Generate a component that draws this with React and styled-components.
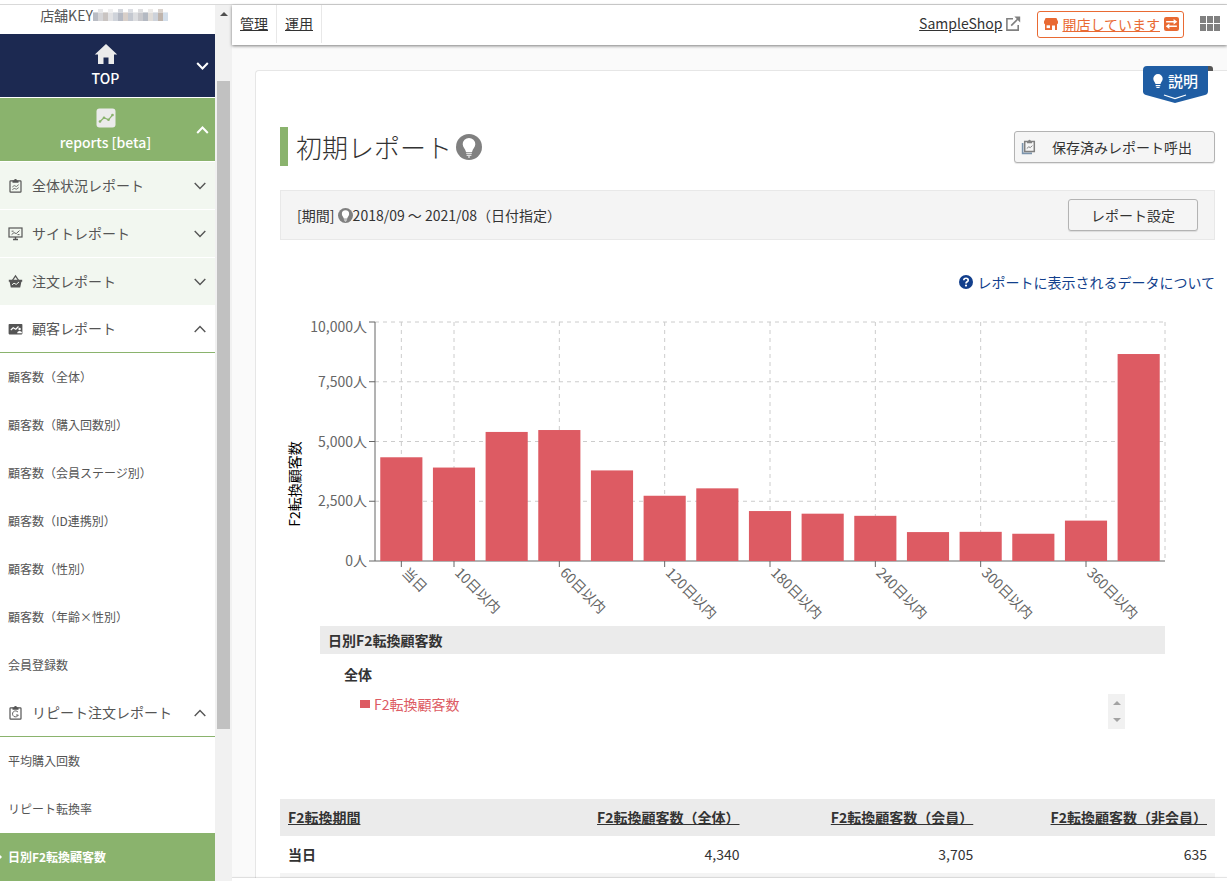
import styled, { createGlobalStyle, css } from 'styled-components';

const GlobalStyle = createGlobalStyle`
	* {
		box-sizing: border-box;
	}
	body {
		margin: 0;
		color: #333;
		background: white;
		font-family: 'Noto Sans CJK JP', sans-serif;
		font-size: 14px;
		line-height: 20px;
	}
	button {
		font: inherit;
		color: inherit;
		cursor: pointer;
	}
`;

const Page = styled.div`
	display: flex;
	height: 100vh;
	padding-top: 4px;
	overflow: hidden;
`;
const Sidebar = styled.aside`
	flex: none;
	display: flex;
	border-top: 1px solid #d9d9d9;
`;
const Menu = styled.nav`
	width: 215px;
	color: #555;
	overflow: hidden;
`;
const ShopKey = styled.div`
	display: flex;
	justify-content: center;
	height: 29px;
	padding-right: 4px;
`;
const Mosaic = styled.svg`
	margin-top: 4px;
`;
const MainItem = styled.button`
	display: grid;
	grid-template-columns: 1fr 13px;
	align-items: center;
	width: 100%;
	height: 64px;
	padding: 0 6px 0 9px;
	border: none;
	border-bottom: 1px solid white;
	color: white;
	font-weight: 500;
	background: ${(props) => (props.$active ? '#8ab36d' : '#1c2951')};
`;
const MainLabel = styled.span`
	display: flex;
	flex-direction: column;
	align-items: center;
	gap: 4px;
	padding-left: 6px;
`;
const GroupItem = styled.button`
	display: flex;
	align-items: center;
	gap: 8px;
	width: 100%;
	height: ${(props) => (props.$beforeOpen ? 47 : 48)}px;
	padding: 0 9px 0 8px;
	border: none;
	border-bottom: ${(props) => (props.$beforeOpen ? 0 : 1)}px solid ${(props) => (props.$open ? '#8ab36d' : 'white')};
	background: ${(props) => (props.$open ? 'white' : '#f2f7f0')};
	text-align: left;
`;
const GroupLabel = styled.span`
	flex: 1;
	padding-bottom: 2px;
`;
const SubItem = styled.a`
	display: flex;
	align-items: center;
	position: relative;
	height: 48px;
	padding: 0 8px;
	color: #555;
	font-size: 12px;
	text-decoration: none;
	${(props) =>
		props.$active &&
		css`
			color: white;
			font-weight: 700;
			background: #8ab36d;
			&::before {
				content: '';
				position: absolute;
				left: -1px;
				border: 3px solid transparent;
				border-left-color: white;
			}
		`}
`;
const ScrollTrack = styled.div`
	display: flex;
	flex-direction: column;
	align-items: center;
	width: 17px;
	background: #f1f1f1;
`;
const ScrollArrow = styled.span`
	border: 4px solid transparent;
	border-top-width: 0;
	border-bottom-color: #505050;
	margin: 7px 0 65px;
`;
const ScrollThumb = styled.div`
	width: 13px;
	height: 74%;
	background: #c1c1c1;
`;

const Main = styled.div`
	flex: 1;
	min-width: 0;
	display: flex;
	flex-direction: column;
	border-top: 1px solid #d9d9d9;
`;
const Header = styled.header`
	display: flex;
	align-items: center;
	flex: none;
	height: 40px;
	padding: 0 7px 2px 0;
	background: white;
	box-shadow: 0 1px 3px rgba(0, 0, 0, 0.5);
	z-index: 1;
`;
const Tab = styled.a`
	display: flex;
	align-items: center;
	height: 38px;
	padding: 0 8px 2px;
	border-right: 1px solid #e8e8e8;
	color: #333;
`;
const ShopLink = styled.a`
	display: flex;
	align-items: center;
	gap: 4px;
	margin-left: auto;
	padding-bottom: 2px;
	color: #333;
`;
const StatusButton = styled.button`
	display: flex;
	align-items: center;
	gap: 4px;
	height: 27px;
	margin: 0 16px;
	padding: 0 4px 0 6px;
	border: 1px solid #e96a33;
	border-radius: 3px;
	background: white;
	color: #e96a33;
`;
const Underlined = styled.span`
	text-decoration: underline;
`;
const IconButton = styled.button`
	display: flex;
	padding: 0;
	border: none;
	background: none;
`;
const Content = styled.main`
	flex: 1;
	min-height: 0;
	padding: 25px 0 0 23px;
	overflow: hidden;
	background: #fafafa;
`;
const Card = styled.section`
	position: relative;
	min-height: 100%;
	padding: 56px 12px 0 24px;
	border: 1px solid #e6e6e6;
	border-right: none;
	border-radius: 4px 0 0 0;
	background: white;
`;
const HelpTag = styled.button`
	position: absolute;
	top: -5px;
	right: 14px;
	width: 70px;
	height: 37px;
	padding: 0;
	border: none;
	background: none;
	color: white;
	font-size: 15px;
	font-weight: 500;
`;
const HelpShape = styled.svg`
	position: absolute;
	left: 0;
	top: 0;
`;
const HelpText = styled.span`
	position: absolute;
	left: 25px;
	top: 5px;
`;
const TitleRow = styled.div`
	display: flex;
	align-items: center;
	justify-content: space-between;
	height: 39px;
`;
const Title = styled.h1`
	display: flex;
	align-items: center;
	gap: 4px;
	height: 39px;
	margin: 0;
	padding-left: 8px;
	border-left: 8px solid #8ab36d;
	font-size: 26px;
	font-weight: 300;
`;
const Button = styled.button`
	display: flex;
	align-items: center;
	gap: 15px;
	height: 32px;
	padding: ${(props) => (props.$icon ? '0 22px 0 6px' : '0 22px')};
	border: 1px solid #b3b3b3;
	border-radius: 3px;
	background: #f5f5f5;
	box-shadow: 0 1px 1px rgba(0, 0, 0, 0.1);
`;
const PeriodBar = styled.div`
	display: flex;
	align-items: center;
	justify-content: space-between;
	height: 50px;
	margin-top: 24px;
	padding: 0 16px;
	border: 1px solid #e8e8e8;
	background: #f4f4f4;
`;
const PeriodText = styled.span`
	display: flex;
	align-items: center;
`;
const AboutLink = styled.a`
	display: flex;
	align-items: center;
	justify-content: flex-end;
	gap: 4px;
	margin-top: 32px;
	color: #123f8c;
	text-decoration: none;
`;
const Chart = styled.svg`
	display: block;
	width: 100%;
	margin-top: 18px;
	font-size: 14px;
`;
const Legend = styled.div`
	margin: 0 50px 0 40px;
`;
const LegendTitle = styled.div`
	height: 28px;
	padding: 4px 8px;
	background: #ebebeb;
	font-weight: 700;
`;
const LegendBody = styled.div`
	display: flex;
	justify-content: space-between;
	align-items: flex-end;
	height: 75px;
	padding: 0 40px 0 24px;
`;
const LegendList = styled.div`
	align-self: flex-start;
	padding-top: 10px;
`;
const LegendGroup = styled.div`
	font-weight: 700;
`;
const LegendEntry = styled.div`
	display: flex;
	align-items: center;
	gap: 4px;
	padding: 10px 16px;
	color: #dd5b63;
`;
const Swatch = styled.span`
	width: 10px;
	height: 8px;
	background: #dd5b63;
`;
const Spinner = styled.div`
	display: flex;
	flex-direction: column;
	align-items: center;
	justify-content: space-between;
	width: 17px;
	height: 35px;
	padding: 7px 0;
	background: #f1f1f1;
`;
const Arrow = styled.span`
	border: 4px solid transparent;
	${(props) =>
		props.$down
			? 'border-bottom-width: 0; border-top-color: #a3a3a3;'
			: 'border-top-width: 0; border-bottom-color: #a3a3a3;'}
`;
const Table = styled.table`
	width: 100%;
	margin-top: 70px;
	border-spacing: 0;
	table-layout: fixed;
`;
const TableEnd = styled.div`
	height: 24px;
	background: #f4f4f4;
`;
const Th = styled.th`
	height: 37px;
	padding: 0 8px 2px;
	background: ${(props) => (props.$row ? 'white' : '#ebebeb')};
	font-weight: 700;
	text-align: ${(props) => (props.$right ? 'right' : 'left')};
`;
const Td = styled.td`
	height: 37px;
	padding: 0 8px 2px;
	text-align: right;
`;
const SortLink = styled.a`
	color: #333;
`;
const Footer = styled.footer`
	flex: none;
	height: 3px;
	background: white;
	box-shadow: 0 -1px 1px rgba(0, 0, 0, 0.12);
	z-index: 1;
`;

const Chevron = ({ up, size = 12, width = 2 }) => (
	<svg width={size} height="8" viewBox="0 0 12 8" fill="none" stroke="currentColor" strokeWidth={width}>
		<path d={up ? 'M0.7 7 6 1.5 11.3 7' : 'M0.7 1 6 6.5 11.3 1'} />
	</svg>
);

const HomeIcon = () => (
	<svg width="24" height="20" viewBox="0 0 24 20" fill="#ebebeb">
		<path d="M12 0 .8 10.6H4V20h5.5v-6.5h5V20H20v-9.4h3.2z" />
	</svg>
);
const ReportsIcon = () => (
	<svg width="20" height="20" viewBox="0 0 20 20">
		<rect x="0.5" y="0.5" width="19" height="19" rx="3" fill="#ebebeb" />
		<path d="M4 13.5 8 9.8l4.5 2L16.5 7" fill="none" stroke="#8ab36d" strokeWidth="1.2" />
		<g fill="#8ab36d">
			<circle cx="4" cy="13.5" r="1.3" />
			<circle cx="8" cy="9.8" r="1.3" />
			<circle cx="12.5" cy="11.8" r="1.3" />
			<circle cx="16.5" cy="7" r="1.3" />
		</g>
	</svg>
);
const ClipboardIcon = ({ repeat }) => (
	<svg width="16" height="16" viewBox="0 0 16 16" fill="none" stroke="#555">
		<rect x="2" y="2.8" width="11" height="11.4" rx="0.8" strokeWidth="1.2" />
		<path d="M4.5 2.5h1.6a1.4 1.4 0 0 1 2.8 0h1.6v2.3h-6z" fill="#555" stroke="none" />
		{repeat ? (
			<path d="M10 7.2A3 3 0 1 0 10.3 10H8" strokeWidth="0.9" />
		) : (
			<path d="M4.3 9 6.2 7.6l2.2.9 2.3-1.8M4.3 11.7l1.9-1.3 2.2.8 2.3-1.6" strokeWidth="0.8" />
		)}
	</svg>
);
const MonitorIcon = () => (
	<svg width="16" height="16" viewBox="0 0 16 16" fill="none" stroke="#555">
		<rect x="1" y="2" width="13" height="9" strokeWidth="1.2" />
		<path d="M3.6 8.6 6 6.6l2.2 1L11.5 4.6M3.6 5.2h2M9.5 8.6h2" strokeWidth="0.9" />
		<path d="M7.5 11v2.5M5 13.5h5" strokeWidth="1.4" />
	</svg>
);
const BasketIcon = () => (
	<svg width="16" height="16" viewBox="0 0 16 16">
		<path d="M4 7 7.5 2 11 7" fill="none" stroke="#555" strokeWidth="1.3" />
		<path d="M0.8 5.8h13.4v2h-.8L12.2 13.4H2.8L1.6 7.8H.8z" fill="#555" />
		<path d="M4 10.8 6 9.2l2.2 1.2L11 8" fill="none" stroke="#f2f7f0" />
	</svg>
);
const CustomerIcon = () => (
	<svg width="16" height="16" viewBox="0 0 16 16">
		<rect x="0.6" y="3" width="13.8" height="10.4" rx="0.8" fill="#555" />
		<path d="M2.8 9 5.2 6.8 7.8 8.2 10.5 5.5" fill="none" stroke="white" strokeWidth="1.2" />
		<circle cx="11.6" cy="8" r="1.2" fill="white" />
		<path d="M9.2 12.2c0-3 4.8-3 4.8 0z" fill="white" />
	</svg>
);
const BulbIcon = ({ size }) => (
	<svg width={size} height={size} viewBox="0 0 26 26">
		<circle cx="13" cy="13" r="13" fill="#808080" />
		<path d="M13 4a6.3 6.3 0 0 0-6.3 6.3c0 3 2.6 4.6 3.3 7.7h6c.7-3.1 3.3-4.7 3.3-7.7A6.3 6.3 0 0 0 13 4z" fill="white" />
		<path d="M10.2 19.3h5.6M10.6 21.3h4.8M12 23h2" stroke="white" strokeWidth="1.1" />
	</svg>
);
const ExternalIcon = () => (
	<svg width="15" height="15" viewBox="0 0 15 15" fill="none" stroke="#808080" strokeWidth="1.6">
		<path d="M7 2.8H.9v11.3h11.3V9M5.2 9.6l7.4-7.4" />
		<path d="M8.4 0.6h5.8v5.8z" fill="#808080" stroke="none" />
	</svg>
);
const ShopIcon = () => (
	<svg width="14" height="14" viewBox="0 0 14 14" fill="#e96a33">
		<path d="M1.6 1h10.8L14 4.6v1.2a1.6 1.6 0 0 1-1 1.5V13h-2V8.5H8V13H1V7.3a1.6 1.6 0 0 1-1-1.5V4.6z" />
		<path d="M2.6 8.3h3.4v2.8H2.6z" fill="white" />
	</svg>
);
const SwapIcon = () => (
	<svg width="15" height="14" viewBox="0 0 14 14" preserveAspectRatio="none">
		<rect width="14" height="14" rx="2" fill="#e96a33" />
		<path d="M2 4.8h8M12 9.2H4" stroke="white" strokeWidth="1.6" />
		<path d="M9 2 12.4 4.8 9 7.4zM5 6.6 1.6 9.2l3.4 2.8z" fill="white" />
	</svg>
);
const GridIcon = () => (
	<svg width="20" height="16" viewBox="0 0 20 16" fill="#808080">
		{[0, 7, 14].map((x) => [0, 8].map((y) => <rect key={`${x}-${y}`} x={x} y={y} width="6" height="7" />))}
	</svg>
);
const SavedIcon = () => (
	<svg width="16" height="16" viewBox="0 0 16 16" fill="none">
		<path d="M1.6 4v10.4H11" stroke="#7b93ab" strokeWidth="1.6" />
		<rect x="3.7" y="2.5" width="9.6" height="10" stroke="#808080" strokeWidth="1.5" />
		<path d="M6 2h1.3a1.2 1.2 0 0 1 2.4 0H11v2.3H6z" fill="#808080" />
		<path d="M5.8 9.5 7.8 7.8l1.5.8 2-2" stroke="#808080" />
	</svg>
);
const QuestionIcon = () => (
	<svg width="14" height="14" viewBox="0 0 14 14">
		<circle cx="7" cy="7" r="7" fill="#123f8c" />
		<path d="M4.8 5.2C4.8 2.6 9.2 2.6 9.2 5.2 9.2 6.8 7 6.8 7 8.4" fill="none" stroke="white" strokeWidth="1.7" />
		<circle cx="7" cy="10.6" r="1.1" fill="white" />
	</svg>
);

const groupIcons = {
	report: <ClipboardIcon />,
	site: <MonitorIcon />,
	order: <BasketIcon />,
	customer: <CustomerIcon />,
	repeat: <ClipboardIcon repeat />,
};

const groups = [
	{ label: '全体状況レポート', icon: 'report' },
	{ label: 'サイトレポート', icon: 'site' },
	{ label: '注文レポート', icon: 'order' },
	{
		label: '顧客レポート',
		icon: 'customer',
		items: [
			'顧客数（全体）',
			'顧客数（購入回数別）',
			'顧客数（会員ステージ別）',
			'顧客数（ID連携別）',
			'顧客数（性別）',
			'顧客数（年齢×性別）',
			'会員登録数',
		],
	},
	{
		label: 'リピート注文レポート',
		icon: 'repeat',
		items: ['平均購入回数', 'リピート転換率', '日別F2転換顧客数'],
	},
];
const activeItem = '日別F2転換顧客数';

const mosaic = ['#b9bcc4', '#d5d5d8', '#c9c4c2', '#e2e2e4', '#cfd3da', '#b6bac4', '#d8cfc9', '#c4c8d0', '#dcdde0', '#c8c8cc', '#b4b9c2', '#e0dcd8', '#cdd2da', '#bfb4ac', '#d3deea'];

const customers = [4340, 3910, 5400, 5480, 3790, 2730, 3040, 2090, 1980, 1890, 1210, 1220, 1140, 1690, 8660];
const dayTicks = { 0: '当日', 1: '10日以内', 3: '60日以内', 5: '120日以内', 7: '180日以内', 9: '240日以内', 11: '300日以内', 13: '360日以内' };
const plot = { left: 95, top: 12, width: 790, height: 239 };
const band = plot.width / customers.length;
const bottom = plot.top + plot.height;
const right = plot.left + plot.width;
const toY = (value) => bottom - (value / 10000) * plot.height;

const columns = ['F2転換期間', 'F2転換顧客数（全体）', 'F2転換顧客数（会員）', 'F2転換顧客数（非会員）'];

const CustomerChart = () => (
	<Chart viewBox="0 0 935 316" role="img" aria-label="F2転換顧客数">
		<g stroke="#ccc" strokeDasharray="4 4">
			{[2500, 5000, 7500, 10000].map((value) => (
				<line key={value} x1={plot.left} x2={right} y1={toY(value)} y2={toY(value)} />
			))}
			{Object.keys(dayTicks).map((i) => {
				const x = plot.left + band * (Number(i) + 0.5);
				return <line key={i} x1={x} x2={x} y1={plot.top} y2={bottom} />;
			})}
			<line x1={right} x2={right} y1={plot.top} y2={bottom} />
		</g>
		<g stroke="#666">
			<line x1={plot.left} x2={plot.left} y1={plot.top} y2={bottom} />
			<line x1={plot.left} x2={right} y1={bottom} y2={bottom} />
		</g>
		{customers.map((value, i) => (
			<rect
				key={i}
				x={plot.left + band * (i + 0.1)}
				y={toY(value)}
				width={band * 0.8}
				height={bottom - toY(value)}
				fill="#dd5b63"
			/>
		))}
		{[0, 2500, 5000, 7500, 10000].map((value) => (
			<g key={value}>
				<line x1={plot.left - 6} x2={plot.left} y1={toY(value)} y2={toY(value)} stroke="#666" />
				<text x={plot.left - 8} y={toY(value) + (value === 10000 ? 10 : 5)} textAnchor="end" fill="#666">
					{value.toLocaleString('en-US')}人
				</text>
			</g>
		))}
		{Object.entries(dayTicks).map(([i, label]) => {
			const x = plot.left + band * (Number(i) + 0.5);
			return (
				<g key={label} transform={`translate(${x} ${bottom})`}>
					<line y2="6" stroke="#666" />
					<text transform="translate(0 7) rotate(45)" x="4" y="4" fill="#666">
						{label}
					</text>
				</g>
			);
		})}
		<text transform="translate(20 174) rotate(-90)" textAnchor="middle" fill="black">
			F2転換顧客数
		</text>
	</Chart>
);

const App = () => {
	return (
		<>
			<GlobalStyle />
			<Page>
				<Sidebar>
					<Menu>
						<ShopKey>
							店舗KEY
							<Mosaic width="78" height="12">
								{mosaic.map((fill, i) => (
									<g key={i} fill={fill}>
										<rect x={i * 5} y="4" width="5" height="8" />
										<rect x={i * 5} y={i % 2 ? 0 : 3} width="5" height="4" opacity="0.6" />
									</g>
								))}
							</Mosaic>
						</ShopKey>
						<MainItem>
							<MainLabel>
								<HomeIcon />
								TOP
							</MainLabel>
							<Chevron size={13} />
						</MainItem>
						<MainItem $active>
							<MainLabel>
								<ReportsIcon />
								reports [beta]
							</MainLabel>
							<Chevron up size={13} />
						</MainItem>
						{groups.map((group, i) => (
							<div key={group.label}>
								<GroupItem
									$open={!!group.items}
									$beforeOpen={!group.items && !!groups[i + 1]?.items}
									aria-expanded={!!group.items}
								>
									{groupIcons[group.icon]}
									<GroupLabel>{group.label}</GroupLabel>
									<Chevron up={!!group.items} width={1.4} />
								</GroupItem>
								{group.items?.map((item) => (
									<SubItem key={item} href="#" $active={item === activeItem}>
										{item}
									</SubItem>
								))}
							</div>
						))}
					</Menu>
					<ScrollTrack>
						<ScrollArrow />
						<ScrollThumb />
					</ScrollTrack>
				</Sidebar>
				<Main>
					<Header>
						<Tab href="#">管理</Tab>
						<Tab href="#">運用</Tab>
						<ShopLink href="#">
							SampleShop
							<ExternalIcon />
						</ShopLink>
						<StatusButton>
							<ShopIcon />
							<Underlined>開店しています</Underlined>
							<SwapIcon />
						</StatusButton>
						<IconButton aria-label="メニュー">
							<GridIcon />
						</IconButton>
					</Header>
					<Content>
						<Card>
							<HelpTag>
								<HelpShape width="70" height="37" viewBox="0 0 70 37">
									<path d="M63 0h4a3 3 0 0 1 3 3v2h-7z" fill="#555" />
									<path d="M4 0h61v25a4 4 0 0 1-3 4l-30 8-29-8a4 4 0 0 1-3-4V4a4 4 0 0 1 4-4z" fill="#1f5da3" />
									<path d="m21 29 11 3.5L43 29" fill="none" stroke="white" strokeWidth="1.3" />
									<path d="M15 8a4.7 4.7 0 0 0-4.7 4.7c0 2.2 1.8 3.2 2.2 5.3h5c.4-2.1 2.2-3.1 2.2-5.3A4.7 4.7 0 0 0 15 8z" fill="white" />
									<path d="M12.7 19.6h4.6M13.4 21.5h3.2" stroke="white" strokeWidth="1.2" />
								</HelpShape>
								<HelpText>説明</HelpText>
							</HelpTag>
							<TitleRow>
								<Title>
									初期レポート
									<BulbIcon size={26} />
								</Title>
								<Button $icon>
									<SavedIcon />
									保存済みレポート呼出
								</Button>
							</TitleRow>
							<PeriodBar>
								<PeriodText>
									[期間]&nbsp;
									<BulbIcon size={15} />
									2018/09 〜 2021/08（日付指定）
								</PeriodText>
								<Button>レポート設定</Button>
							</PeriodBar>
							<AboutLink href="#">
								<QuestionIcon />
								レポートに表示されるデータについて
							</AboutLink>
							<CustomerChart />
							<Legend>
								<LegendTitle>日別F2転換顧客数</LegendTitle>
								<LegendBody>
									<LegendList>
										<LegendGroup>全体</LegendGroup>
										<LegendEntry>
											<Swatch />
											F2転換顧客数
										</LegendEntry>
									</LegendList>
									<Spinner>
										<Arrow />
										<Arrow $down />
									</Spinner>
								</LegendBody>
							</Legend>
							<Table>
								<thead>
									<tr>
										{columns.map((column, i) => (
											<Th key={column} scope="col" $right={i > 0}>
												<SortLink href="#">{column}</SortLink>
											</Th>
										))}
									</tr>
								</thead>
								<tbody>
									<tr>
										<Th scope="row" $row>
											当日
										</Th>
										<Td>4,340</Td>
										<Td>3,705</Td>
										<Td>635</Td>
									</tr>
								</tbody>
							</Table>
							<TableEnd />
						</Card>
					</Content>
					<Footer />
				</Main>
			</Page>
		</>
	);
};

export default App;
